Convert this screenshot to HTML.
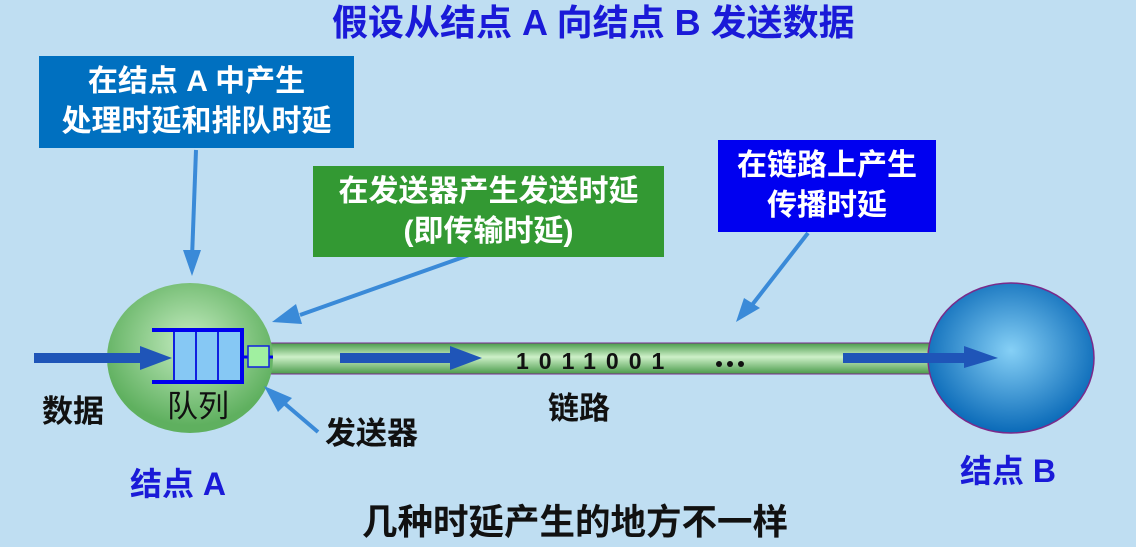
<!DOCTYPE html>
<html><head><meta charset="utf-8"><style>
html,body{margin:0;padding:0}
body{width:1136px;height:547px;background:#bfdef2;position:relative;overflow:hidden;font-family:"Liberation Sans","Noto Sans CJK SC",sans-serif;font-weight:bold}
.t{position:absolute;white-space:nowrap;line-height:1}
.box{position:absolute;color:#fff;text-align:center;font-size:30px;line-height:40px;display:flex;flex-direction:column;justify-content:center}
</style></head><body>
<svg width="1136" height="547" style="position:absolute;left:0;top:0">
<defs>
<radialGradient id="ga" cx="50%" cy="40%" r="55%"><stop offset="0" stop-color="#c4ecc0"/><stop offset="1" stop-color="#5fb05f"/></radialGradient>
<radialGradient id="gb" cx="50%" cy="45%" r="55%"><stop offset="0" stop-color="#86d0f6"/><stop offset="1" stop-color="#0a6ab8"/></radialGradient>
<linearGradient id="tube" x1="0" y1="0" x2="0" y2="1"><stop offset="0" stop-color="#4a9a4a"/><stop offset="0.45" stop-color="#cdf0c8"/><stop offset="1" stop-color="#4a9a4a"/></linearGradient>
</defs>
<rect x="265" y="343" width="670" height="31" fill="url(#tube)" stroke="#7a2a8a" stroke-width="1"/>
<ellipse cx="190" cy="358" rx="83" ry="75" fill="url(#ga)"/>
<ellipse cx="1011" cy="358" rx="83" ry="75" fill="url(#gb)" stroke="#7a2a8a" stroke-width="1.5"/>
<rect x="174" y="332" width="66" height="48" fill="#86c8f4"/>
<line x1="174" y1="332" x2="174" y2="380" stroke="#1020e0" stroke-width="2"/>
<line x1="196" y1="332" x2="196" y2="380" stroke="#1020e0" stroke-width="2"/>
<line x1="218" y1="332" x2="218" y2="380" stroke="#1020e0" stroke-width="2"/>
<path d="M152 330 H242 V382 H152" fill="none" stroke="#0000ee" stroke-width="4"/>
<line x1="242" y1="357" x2="273" y2="357" stroke="#0000ee" stroke-width="3"/>
<rect x="248" y="346" width="21" height="21" fill="#a0f0a0" stroke="#1020e0" stroke-width="1.5"/>
<path d="M34 353 H140 V346 L172 358 L140 370 V363 H34Z" fill="#1f55b8"/>
<path d="M340 353 H450 V346 L482 358 L450 370 V363 H340Z" fill="#1f55b8"/>
<path d="M843 353 H964 V346 L998 358 L964 368 V363 H843Z" fill="#1f55b8"/>
<g stroke="#3a8ad8" stroke-width="4" fill="#3a8ad8">
<line x1="196" y1="150" x2="192" y2="258"/>
<line x1="472" y1="254" x2="300" y2="315"/>
<line x1="808" y1="233" x2="752" y2="305"/>
<line x1="318" y1="432" x2="284" y2="403"/>
</g>
<g fill="#3a8ad8">
<path d="M183 250 L201 250 L192 276Z"/>
<path d="M296 304 L302 324 L272 322Z"/>
<path d="M744 298 L760 308 L736 322Z"/>
<path d="M278 412 L292 398 L264 386Z"/>
</g>
<g fill="#111"><circle cx="719" cy="364" r="3"/><circle cx="730" cy="364" r="3"/><circle cx="741" cy="364" r="3"/></g>
</svg>
<div class="t" style="left:332px;top:5px;font-size:36px;color:#1a1ad8">假设从结点 A 向结点 B 发送数据</div>
<div class="box" style="left:39px;top:56px;width:315px;height:92px;background:#0070c0">在结点 A 中产生<br>处理时延和排队时延</div>
<div class="box" style="left:313px;top:166px;width:351px;height:91px;background:#339933">在发送器产生发送时延<br>(即传输时延)</div>
<div class="box" style="left:718px;top:140px;width:218px;height:92px;background:#0000f0">在链路上产生<br>传播时延</div>
<div class="t" style="left:516px;top:350px;font-size:23px;letter-spacing:10px;color:#111">1011001</div>
<div class="t" style="left:42px;top:396px;font-size:31px;color:#111">数据</div>
<div class="t" style="left:167px;top:391px;font-size:31px;color:#111;font-weight:normal">队列</div>
<div class="t" style="left:325px;top:418px;font-size:31px;color:#111">发送器</div>
<div class="t" style="left:548px;top:393px;font-size:31px;color:#111">链路</div>
<div class="t" style="left:130px;top:468px;font-size:32px;color:#1a1ad8">结点 A</div>
<div class="t" style="left:960px;top:455px;font-size:32px;color:#1a1ad8">结点 B</div>
<div class="t" style="left:362px;top:505px;font-size:35.5px;color:#111">几种时延产生的地方不一样</div>
</body></html>
